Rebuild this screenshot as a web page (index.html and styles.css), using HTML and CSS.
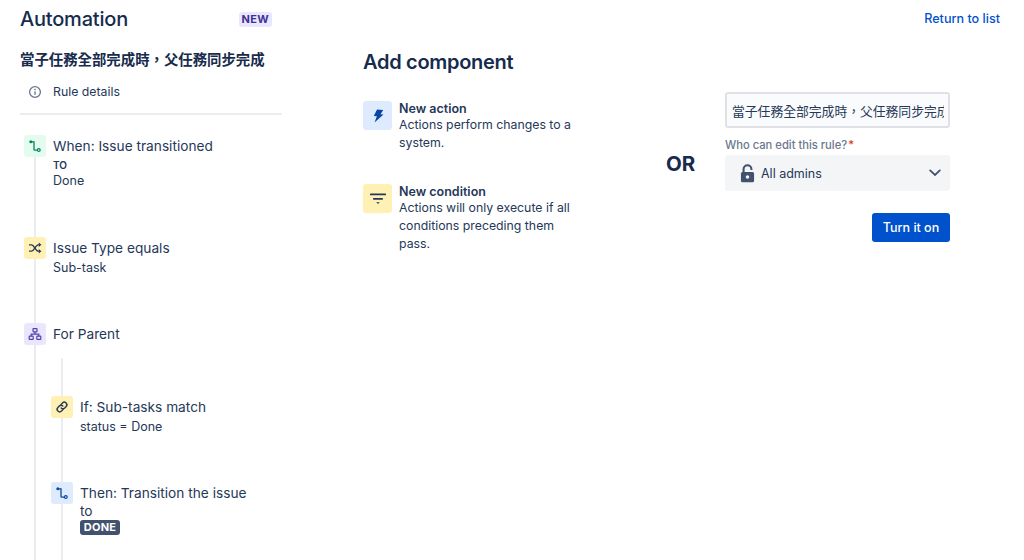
FILE: index.html
```html
<!DOCTYPE html>
<html lang="en">
<head>
  <meta charset="UTF-8" />
  <meta name="viewport" content="width=device-width, initial-scale=1.0"/>
  <title>Automation</title>
  <link rel="stylesheet" href="styles.css">
</head>
<body>

  <!-- Rule sidebar -->
  <div class="sidebar">
    <div class="sidebar-header">
      <h1>Automation</h1>
      <span class="new-badge">NEW</span>
    </div>
    <div class="rule-name">當子任務全部完成時，父任務同步完成</div>
    <div class="rule-details">
      <svg class="info-icon" viewBox="0 0 14 14" width="14" height="14">
        <circle cx="7" cy="7" r="5.4" fill="none" stroke="#6b778c" stroke-width="1.3"/>
        <rect x="6.3" y="6.2" width="1.4" height="3.6" rx="0.5" fill="#6b778c"/>
        <circle cx="7" cy="4.5" r="0.85" fill="#6b778c"/>
      </svg>
      <span>Rule details</span>
    </div>

    <div class="steps">
      <div class="step step-when">
        <div class="step-icon green">
          <svg viewBox="0 0 14 14" width="14" height="14">
            <path d="M3 2.8h3v7.6c0 .5.3.8.8.8h3" fill="none" stroke="#00875a" stroke-width="1.3"/>
            <circle cx="2.8" cy="2.8" r="1.5" fill="#00875a"/>
            <circle cx="10.8" cy="11.1" r="1.4" fill="#e3fcef" stroke="#00875a" stroke-width="1.2"/>
          </svg>
        </div>
        <div class="step-text">
          <div class="step-title">When: Issue transitioned</div>
          <div class="step-label">TO</div>
          <div class="step-sub">Done</div>
        </div>
      </div>

      <div class="step step-type">
        <div class="step-icon yellow">
          <svg viewBox="0 0 14 14" width="14" height="14">
            <path d="M1 3.8h2.6c2.6 0 3.8 6.4 6.6 6.4h1.6M1 10.2h2.6c2.6 0 3.8-6.4 6.6-6.4h1.6" fill="none" stroke="#253858" stroke-width="1.3"/>
            <path d="M10.8 1.6l2.6 2.2-2.6 2.2zM10.8 8l2.6 2.2-2.6 2.2z" fill="#253858"/>
          </svg>
        </div>
        <div class="step-text">
          <div class="step-title">Issue Type equals</div>
          <div class="step-sub">Sub-task</div>
        </div>
      </div>

      <div class="step step-parent">
        <div class="step-icon purple">
          <svg viewBox="0 0 14 14" width="14" height="14">
            <g fill="none" stroke="#5243aa" stroke-width="1.2">
              <rect x="5" y="1.6" width="4" height="3.2" rx="0.5"/>
              <rect x="1.2" y="9.2" width="4" height="3.2" rx="0.5"/>
              <rect x="8.8" y="9.2" width="4" height="3.2" rx="0.5"/>
              <path d="M7 4.8v2.3M3.2 9.2V7.1h7.6v2.1"/>
            </g>
          </svg>
        </div>
        <div class="step-text">
          <div class="step-title">For Parent</div>
        </div>
      </div>

      <div class="branch">
        <div class="step step-if">
          <div class="step-icon yellow">
            <svg viewBox="0 0 14 14" width="14" height="14">
              <g fill="none" stroke="#253858" stroke-width="1.4" stroke-linecap="round">
                <path d="M6 4.4l1.5-1.5a2.5 2.5 0 0 1 3.6 3.6L9.7 8a2.5 2.5 0 0 1-3.5 0"/>
                <path d="M8 9.6l-1.5 1.5a2.5 2.5 0 0 1-3.6-3.6L4.3 6a2.5 2.5 0 0 1 3.5 0"/>
              </g>
            </svg>
          </div>
          <div class="step-text">
            <div class="step-title">If: Sub-tasks match</div>
            <div class="step-sub">status = Done</div>
          </div>
        </div>

        <div class="step">
          <div class="step-icon blue">
            <svg viewBox="0 0 14 14" width="14" height="14">
              <path d="M3 2.8h3v7.6c0 .5.3.8.8.8h3" fill="none" stroke="#0747a6" stroke-width="1.3"/>
              <circle cx="2.8" cy="2.8" r="1.5" fill="#0747a6"/>
              <circle cx="10.8" cy="11.1" r="1.4" fill="#deebff" stroke="#0747a6" stroke-width="1.2"/>
            </svg>
          </div>
          <div class="step-text">
            <div class="step-title">Then: Transition the issue to</div>
            <span class="status-lozenge">DONE</span>
          </div>
        </div>
      </div>
    </div>
  </div>

  <!-- Add component -->
  <div class="components">
    <h2>Add component</h2>
    <div class="component">
      <div class="component-icon blue">
        <svg viewBox="0 0 16 16" width="16" height="16">
          <path d="M6.6 1.6h6.2L10.4 6h3L5 14.8l1.9-6.4H3.8z" fill="#0747a6" transform="rotate(4 8 8)"/>
        </svg>
      </div>
      <div class="component-text">
        <strong>New action</strong>
        <p>Actions perform changes to a system.</p>
      </div>
    </div>
    <div class="component">
      <div class="component-icon yellow">
        <svg viewBox="0 0 18 18" width="18" height="18">
          <rect x="1" y="3.6" width="16" height="1.7" rx="0.6" fill="#253858"/>
          <rect x="4" y="8" width="10" height="1.7" rx="0.6" fill="#253858"/>
          <path d="M7.2 12.3h3.6L9 14.1z" fill="#253858"/>
        </svg>
      </div>
      <div class="component-text">
        <strong>New condition</strong>
        <p>Actions will only execute if all conditions preceding them pass.</p>
      </div>
    </div>
  </div>

  <div class="or-text">OR</div>

  <!-- Rule form -->
  <div class="rule-form">
    <a class="return-link" href="#">Return to list</a>
    <input class="name-input" type="text" value="當子任務全部完成時，父任務同步完成" />
    <label class="field-label">Who can edit this rule?<span class="required">*</span></label>
    <div class="select-box">
      <svg viewBox="0 0 16 20" width="15" height="19">
        <path d="M3.8 10V5.4a4.2 4.2 0 0 1 8.4 0v.8" fill="none" stroke="#42526e" stroke-width="2.2"/>
        <rect x="1" y="8.4" width="14" height="11" rx="1.6" fill="#42526e"/>
        <circle cx="8" cy="13.8" r="1.9" fill="#f4f5f7"/>
      </svg>
      <span class="select-value">All admins</span>
      <svg class="chevron" viewBox="0 0 12 8" width="12" height="8">
        <path d="M1.2 1.4L6 6l4.8-4.6" fill="none" stroke="#42526e" stroke-width="1.8" stroke-linecap="round"/>
      </svg>
    </div>
    <div class="form-actions">
      <button class="turn-on" type="button">Turn it on</button>
    </div>
  </div>

</body>
</html>
```

FILE: styles.css
```css
* {
  box-sizing: border-box;
}

html, body {
  height: 560px;
  overflow: hidden;
}

body {
  margin: 0;
  display: flex;
  align-items: flex-start;
  background: #fff;
  color: #253858;
  font-family: Inter, "Noto Sans CJK TC", sans-serif;
  font-size: 14px;
  line-height: 20px;
}

/* Sidebar */
.sidebar {
  width: 262px;
  margin-left: 20px;
  flex-shrink: 0;
}

.sidebar-header {
  display: flex;
  align-items: center;
  justify-content: space-between;
  height: 26px;
  margin-top: 6px;
  padding-right: 10px;
}

.sidebar-header h1 {
  margin: 0;
  font-size: 20px;
  line-height: 26px;
  font-weight: 500;
  color: #172b4d;
  letter-spacing: -0.2px;
}

.new-badge {
  padding: 0 3px;
  border-radius: 3px;
  background: #eae6ff;
  color: #403294;
  font-size: 11px;
  line-height: 15px;
  font-weight: 700;
  letter-spacing: 0.3px;
}

.rule-name {
  margin-top: 18px;
  font-size: 14.4px;
  font-weight: 600;
  color: #172b4d;
}

.rule-details {
  display: flex;
  align-items: center;
  height: 20px;
  margin-top: 12px;
  padding-left: 8px;
  font-size: 12.3px;
}

.info-icon {
  margin-right: 11px;
}

.steps {
  position: relative;
  height: 460px;
  margin-top: 11px;
  padding-top: 20px;
  border-top: 2px solid #ebecf0;
}

.steps::before {
  content: "";
  position: absolute;
  left: 14px;
  top: 30px;
  bottom: 0;
  width: 2px;
  background: #ebecf0;
}

.step {
  position: relative;
  display: flex;
  gap: 7px;
  margin-left: 4px;
}

.step-when {
  margin-bottom: 47px;
}

.step-type {
  margin-bottom: 46px;
}

.step-parent {
  margin-bottom: 13px;
}

.step-icon {
  display: flex;
  align-items: center;
  justify-content: center;
  width: 22px;
  height: 22px;
  flex-shrink: 0;
  border-radius: 3px;
}

.green { background: #e3fcef; }
.yellow { background: #fff0b3; }
.purple { background: #eae6ff; }
.blue { background: #deebff; }

.step-text {
  padding-top: 2px;
  min-width: 0;
}

.step-title {
  font-size: 13.7px;
  line-height: 18px;
}

.step-label {
  font-size: 10px;
  line-height: 16px;
  font-weight: 600;
  margin-top: 2px;
}

.step-sub {
  font-size: 12.5px;
  line-height: 18px;
  margin-top: 2px;
}

.step-label + .step-sub {
  margin-top: -1px;
}

.branch {
  position: relative;
  margin-left: 27px;
  padding-top: 38px;
  height: 216px;
}

.branch::before {
  content: "";
  position: absolute;
  left: 14px;
  top: 0;
  bottom: 0;
  width: 2px;
  background: #ebecf0;
}

.step-if {
  margin-bottom: 46px;
}

.branch .step-text {
  width: 180px;
}

.status-lozenge {
  display: block;
  width: 40px;
  border-radius: 3px;
  background: #42526e;
  color: #fff;
  font-size: 11px;
  line-height: 15px;
  font-weight: 700;
  text-align: center;
  letter-spacing: 0.2px;
}

/* Add component */
.components {
  width: 220px;
  margin-left: 81px;
  flex-shrink: 0;
}

.components h2 {
  margin: 47px 0 24px;
  font-size: 20px;
  line-height: 30px;
  font-weight: 600;
  color: #172b4d;
  letter-spacing: -0.3px;
}

.component {
  display: flex;
  gap: 7px;
  margin-bottom: 32px;
}

.component-icon {
  display: flex;
  align-items: center;
  justify-content: center;
  width: 29px;
  height: 29px;
  flex-shrink: 0;
  border-radius: 3px;
}

.component-text strong {
  display: block;
  font-size: 12.5px;
  line-height: 15px;
  font-weight: 600;
}

.component-text p {
  margin: 0;
  font-size: 12.3px;
  line-height: 18px;
}

.or-text {
  width: 59px;
  margin-top: 151px;
  margin-left: 83px;
  flex-shrink: 0;
  font-size: 20.5px;
  line-height: 26px;
  font-weight: 700;
  color: #172b4d;
}

/* Rule form */
.rule-form {
  display: flex;
  flex-direction: column;
  width: 225px;
  flex-shrink: 0;
  position: relative;
  padding-top: 92px;
}

.return-link {
  position: absolute;
  top: 8px;
  right: -50px;
  color: #0052cc;
  font-size: 12.6px;
  line-height: 21px;
  font-weight: 500;
  text-decoration: none;
}

.name-input {
  width: 100%;
  height: 36px;
  padding: 0 4px 0 5px;
  border: 2px solid #dfe1e6;
  border-radius: 3px;
  background: #fafbfc;
  color: #253858;
  font-family: Inter, "Noto Sans CJK TC", sans-serif;
  font-size: 12.8px;
}

.field-label {
  margin-top: 9px;
  font-size: 11.2px;
  line-height: 16px;
  font-weight: 500;
  color: #6b778c;
}

.required {
  margin-left: 1px;
  color: #de350b;
}

.select-box {
  display: flex;
  align-items: center;
  height: 36px;
  margin-top: 2px;
  padding: 0 9px 0 15px;
  border-radius: 3px;
  background: #f4f5f7;
}

.select-value {
  margin-left: 6px;
  padding-top: 1px;
  font-size: 12.5px;
}

.chevron {
  margin-left: auto;
}

.form-actions {
  display: flex;
  justify-content: flex-end;
  margin-top: 22px;
}

.turn-on {
  width: 78px;
  height: 29px;
  padding: 0;
  border: none;
  border-radius: 3px;
  background: #0052cc;
  color: #fff;
  font-family: Inter, sans-serif;
  font-size: 12.5px;
  font-weight: 500;
}
```
